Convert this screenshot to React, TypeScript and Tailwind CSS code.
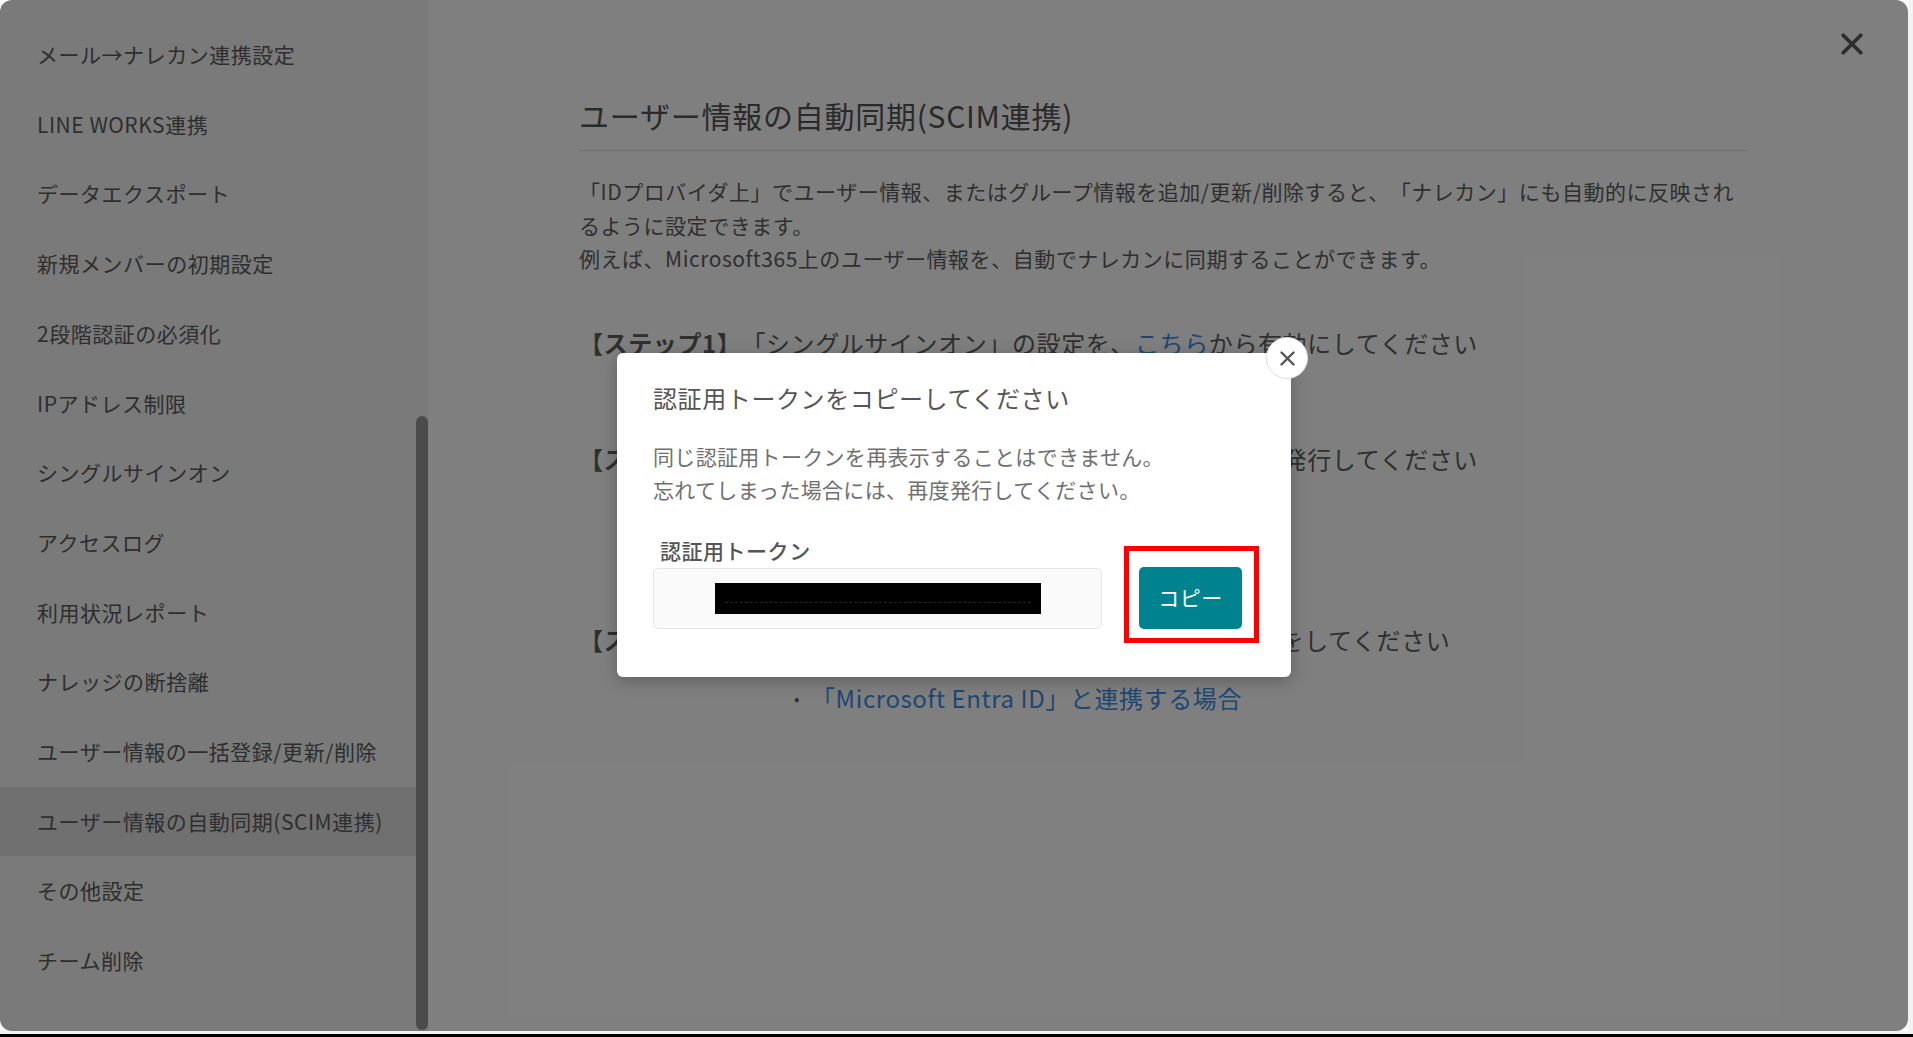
import { useState } from 'react';

const menuItems = [
  'メール→ナレカン連携設定',
  'LINE WORKS連携',
  'データエクスポート',
  '新規メンバーの初期設定',
  '2段階認証の必須化',
  'IPアドレス制限',
  'シングルサインオン',
  'アクセスログ',
  '利用状況レポート',
  'ナレッジの断捨離',
  'ユーザー情報の一括登録/更新/削除',
  'ユーザー情報の自動同期(SCIM連携)',
  'その他設定',
  'チーム削除',
];

function CrossIcon({ size, stroke, color }: { size: number; stroke: number; color: string }) {
  return (
    <svg width={size} height={size} viewBox="0 0 20 20" fill="none">
      <path d="M2 2L18 18M18 2L2 18" stroke={color} strokeWidth={stroke} strokeLinecap="round" />
    </svg>
  );
}

export default function App() {
  const [active] = useState('ユーザー情報の自動同期(SCIM連携)');

  return (
    <div className="w-[1913px] h-[1037px] overflow-hidden bg-white flex flex-col font-['Noto_Sans_CJK_JP','Noto_Sans',sans-serif] [text-spacing-trim:space-all]">
      <div className="flex">
        <div className="relative w-[1908px] h-[1031px] rounded-[12px] overflow-hidden bg-white flex">
          {/* Sidebar */}
          <aside className="w-[428px] h-full bg-[#f4f4f4] flex">
            <nav className="w-[416px] pt-[20px]">
              {menuItems.map(item => (
                <div
                  key={item}
                  className={`h-[69.7px] flex items-center pl-[37px] text-[21px] tracking-[0.025em] text-[#5c5c5c] whitespace-nowrap ${
                    item === active ? 'bg-[#e1e1e1]' : ''
                  }`}
                >
                  {item}
                </div>
              ))}
            </nav>
            <div className="w-[12px] flex flex-col pt-[416px] pb-[1px]">
              <div className="flex-1 rounded-full bg-[#969696]" />
            </div>
          </aside>

          {/* Main */}
          <main className="flex-1 pl-[151px] pt-[95px]">
            <div className="w-[1169px]">
              <h1 className="text-[30px] leading-[40px] tracking-[0.025em] text-[#555] whitespace-nowrap">
                ユーザー情報の自動同期(SCIM連携)
              </h1>
              <hr className="mt-[15px] border-0 border-t border-[#dcdcdc]" />
              <div className="mt-[24px] text-[21px] leading-[33.6px] tracking-[0.025em] text-[#5e5e5e]">
                <p className="whitespace-nowrap">
                  「IDプロバイダ上」でユーザー情報、またはグループ情報を追加/更新/削除すると、「ナレカン」にも自動的に反映され
                </p>
                <p className="whitespace-nowrap">るように設定できます。</p>
                <p className="whitespace-nowrap">例えば、Microsoft365上のユーザー情報を、自動でナレカンに同期することができます。</p>
              </div>

              <p className="mt-[49px] text-[24px] leading-[36px] tracking-[0.025em] text-[#5e5e5e] whitespace-nowrap">
                <span className="font-bold">【ステップ1】</span>「シングルサインオン」の設定を、
                <span className="text-[#3c8ee4]">こちら</span>から有効にしてください
              </p>

              <p className="mt-[80px] text-[24px] leading-[36px] tracking-[0.025em] text-[#5e5e5e] whitespace-nowrap">
                <span className="font-bold">【ステップ2】</span>「ナレカン」上で認証用トークンを、こちらから発行してください
              </p>

              <p className="mt-[145px] text-[24px] leading-[36px] tracking-[0.025em] text-[#5e5e5e] whitespace-nowrap">
                <span className="font-bold">【ステップ3】</span>「IDプロバイダ」側で、以下の手順に沿って設定をしてください
              </p>

              <ul className="mt-[22px] pl-[215px] text-[24px] leading-[36px] tracking-[0.025em]">
                <li className="flex items-center whitespace-nowrap">
                  <span className="w-[17px] text-[#5e5e5e] text-[16px]">•</span>
                  <span className="text-[#3c8ee4]">「Microsoft Entra ID」と連携する場合</span>
                </li>
              </ul>
            </div>
          </main>

          <button className="absolute right-[45px] top-[33px] w-[22px] h-[22px] flex items-center justify-center">
            <CrossIcon size={22} stroke={3.4} color="#5a5a5a" />
          </button>

          {/* Overlay */}
          <div className="absolute inset-0 bg-black/50" />

          {/* Dialog */}
          <div className="absolute left-[617px] top-[353px] w-[674px] h-[324px] bg-white rounded-[6px] shadow-[0_4px_16px_rgba(0,0,0,0.25)]">
            <div className="pl-[36px] pr-[49px] pt-[28px]">
              <h2 className="text-[24px] leading-[34px] tracking-[0.025em] text-[#555] whitespace-nowrap">
                認証用トークンをコピーしてください
              </h2>
              <p className="mt-[25px] text-[21px] leading-[33px] tracking-[0.015em] text-[#707070] whitespace-nowrap">
                同じ認証用トークンを再表示することはできません。
                <br />
                忘れてしまった場合には、再度発行してください。
              </p>
              <div className="mt-[30px] pl-[7px] text-[21px] leading-[28px] tracking-[0.025em] font-medium text-[#555]">
                認証用トークン
              </div>
              <div className="mt-[3px] flex items-center gap-[37px]">
                <div className="w-[449px] h-[61px] rounded-[5px] border border-[#e6e6e6] bg-[#fafafa] flex items-center justify-center">
                  <div className="w-[326px] h-[31px] bg-black flex flex-col pt-[19px] px-[10px]">
                    <div className="border-b border-dashed border-[#262626]" />
                  </div>
                </div>
                <button className="w-[103px] h-[62px] rounded-[5px] bg-[#00838f] text-white text-[21px] tracking-[0.02em] flex items-center justify-center">
                  コピー
                </button>
              </div>
            </div>

            {/* close */}
            <button className="absolute -top-[16px] left-[649px] w-[42px] h-[42px] rounded-full bg-white border border-[#dedede] flex items-center justify-center">
              <CrossIcon size={15} stroke={3.2} color="#555" />
            </button>

            {/* highlight annotation */}
            <div className="absolute left-[507px] top-[193px] w-[135px] h-[97px] border-[5px] border-[#ff0000]" />
          </div>
        </div>
        <div className="w-[5px] bg-[#f2f2f2]" />
      </div>
      <div className="h-[3px] bg-[#f2f2f2]" />
      <div className="h-[3px] bg-black" />
    </div>
  );
}
